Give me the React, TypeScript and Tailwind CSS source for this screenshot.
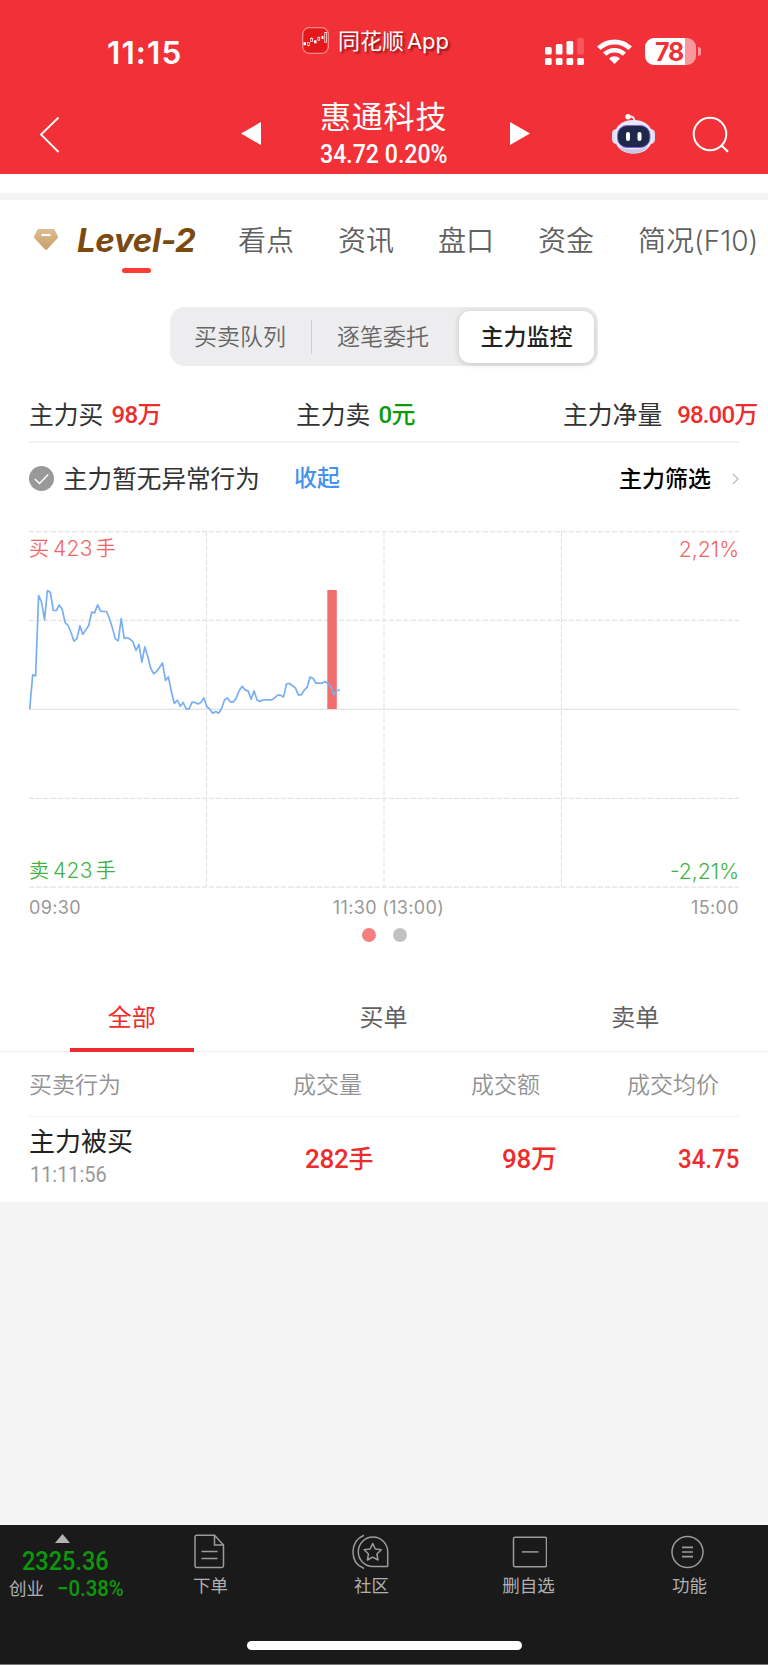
import React from 'react';

const UP = 'text-[#ee2c2c]';
const DIN = "font-['Roboto','Noto_Sans_CJK_SC',sans-serif]";
// Roboto squeezed a little, close to the narrow figures of DIN
const NARROW_LEFT = 'inline-block origin-left scale-x-[0.925]';
const NARROW_RIGHT = 'inline-block origin-right scale-x-[0.925]';

// One value per trading minute, 534 is the upper edge of the chart (2.21%)
const PRICES = [
  0, 103, 100, 341, 322, 268, 356, 350, 296, 296, 313, 300, 260, 251, 230, 204, 211, 250, 225, 238, 251, 291, 289, 313,
  294, 293, 293, 272, 244, 211, 205, 272, 212, 215, 210, 202, 176, 194, 141, 187, 158, 123, 106, 113, 126, 139, 86, 97,
  53, 17, 27, 9, 20, 1, 1, 21, 20, 16, 20, 34, 8, 0, -12, -7, -12, 2, 28, 34, 22, 22, 34, 56, 69, 57, 55, 30, 55, 28,
  23, 28, 28, 28, 28, 34, 42, 42, 37, 76, 77, 71, 64, 43, 43, 57, 66, 97, 92, 78, 78, 78, 83, 77, 68, 43, 56, 57,
];

const StatusBar: React.FC = () => (
  <div className="flex h-[94px] items-start">
    <div className="ml-[107px] mt-[36px] w-[195px] text-[31.5px] font-semibold leading-[34px] tracking-[1.1px]">11:15</div>
    <svg className="mt-[27px] h-[27px] w-[27px]" viewBox="0 0 27 27" fill="none">
      <rect x="0.7" y="0.7" width="25.6" height="25.6" rx="6.5" fill="#e3191d" stroke="#fb8a8b" strokeWidth="1.3" />
      <path d="M1.500 16.700h2.500M12 14.700h2.500M19.500 10.500h2" stroke="#fff" strokeWidth="3" />
      <rect x="5.400" y="15.500" width="1.900" height="2.800" stroke="#fff" strokeWidth="0.7" />
      <rect x="8.700" y="11.500" width="2" height="3" stroke="#fff" strokeWidth="0.7" />
      <rect x="15.800" y="10.500" width="1.900" height="2.500" stroke="#fff" strokeWidth="0.7" />
      <rect x="22.800" y="5.500" width="1.800" height="10" stroke="#fff" strokeWidth="0.7" />
      <path d="M6.400 18.300v1M9.700 10.300v1.200M16.700 9.500v1M16.700 13v1" stroke="#fff" strokeWidth="0.7" />
    </svg>
    <div className="ml-[9px] mt-[29px] w-[207px] whitespace-nowrap text-[22px] leading-6 [text-shadow:2px_2px_2px_rgba(90,0,0,0.6)]">
      同花顺<span className="ml-[3px] tracking-[-0.1px]">App</span>
    </div>
    <svg className="mt-[38px] h-[27px] w-[39px]" viewBox="0 0 39 27" fill="#fff">
      <rect x="0" y="9" width="6.700" height="7.500" rx="1.500" />
      <rect x="10.800" y="6" width="6.700" height="10.500" rx="1.500" />
      <rect x="21.500" y="3" width="6.700" height="13.500" rx="1.500" />
      <rect x="32.200" y="0" width="6.700" height="16.500" rx="1.500" fillOpacity="0.2" />
      <rect x="0" y="20" width="6.700" height="7" rx="1.500" />
      <rect x="10.800" y="20" width="6.700" height="7" rx="1.500" />
      <rect x="21.500" y="20" width="6.700" height="7" rx="1.500" />
      <rect x="32.200" y="20" width="6.700" height="7" rx="1.500" />
    </svg>
    <svg className="ml-[13px] mt-[39px] h-[25px] w-[35px]" viewBox="0 0 35 25" fill="none" stroke="#fff">
      <path d="M1.800 9.300a22.500 22.500 0 0 1 31.400 0" strokeWidth="5" />
      <path d="M7.600 15.200a14.200 14.200 0 0 1 19.800 0" strokeWidth="4.600" />
      <path d="M17.500 25L12 19.400a7.800 7.800 0 0 1 11 0z" fill="#fff" stroke="none" />
    </svg>
    <div className="ml-[13px] mt-[38px] h-[27px] w-[51px] rounded-[9px] bg-[linear-gradient(90deg,#fff_40px,#f9989c_40px)] pl-[10px] text-[25px] font-bold leading-[28px] tracking-[-1.2px] text-[#f23037]">
      78
    </div>
    <div className="ml-[2px] mt-[47px] h-[9px] w-[3px] rounded-r-[3px] bg-[#f9989c]" />
  </div>
);

const RobotIcon: React.FC = () => (
  <svg className="h-[40px] w-[43px]" viewBox="0 0 43 40" fill="none">
    <path d="M16 2.700c4-1 6.500.5 6.500 4.300" stroke="#e6e4f8" strokeWidth="2" />
    <circle cx="16" cy="2.800" r="2.700" fill="#fff" />
    <rect x="0" y="15" width="9" height="15" rx="4.500" fill="#dcdcf2" />
    <rect x="34" y="15" width="9" height="15" rx="4.500" fill="#dcdcf2" />
    <path d="M21.500 6C9 6 2.500 13 2.500 22.500S9 39.500 21.500 39.500s19-7.500 19-17S34 6 21.500 6z" fill="#e8e8f6" />
    <path d="M7 32.500c3.500 4.700 8.500 7 14.500 7s11-2.300 14.500-7c-7 4-22 4-29 0z" fill="#c9c7ea" />
    <rect x="5.500" y="11.500" width="32.500" height="22" rx="9.500" fill="#1e284b" stroke="#8b62dc" strokeWidth="1" />
    <rect x="14" y="18" width="4" height="9" rx="2" fill="#fff" />
    <rect x="25.500" y="18" width="4" height="9" rx="2" fill="#fff" />
  </svg>
);

const NavBar: React.FC = () => (
  <div className="flex h-[80px] items-start">
    <svg className="ml-[39px] mt-[22px] h-[37px] w-[21px]" viewBox="0 0 21 37" fill="none" stroke="#fff" strokeWidth="1.800">
      <path d="M19.500 1.500L2 18.500l17.500 17.500" />
    </svg>
    <svg className="ml-[181px] mt-[28px] h-[23px] w-[20px]" viewBox="0 0 20 23" fill="#fff">
      <path d="M0 11.500L20 0v23z" />
    </svg>
    <div className="ml-[59px] w-[127px] whitespace-nowrap">
      <div className="mt-[6px] text-[31px] leading-[33px] tracking-[0.8px]">惠通科技</div>
      <div className={`mt-[9px] text-[25px] font-medium leading-[25px] ${DIN}`}>
        <span className={NARROW_LEFT}>34.72 0.20%</span>
      </div>
    </div>
    <svg className="ml-[63px] mt-[28px] h-[23px] w-[20px]" viewBox="0 0 20 23" fill="#fff">
      <path d="M20 11.500L0 0v23z" />
    </svg>
    <div className="ml-[82px] mt-[20px]">
      <RobotIcon />
    </div>
    <svg className="ml-[37px] mt-[22px] h-[38px] w-[38px]" viewBox="0 0 38 38" fill="none" stroke="#fff" strokeWidth="2">
      <circle cx="18" cy="18" r="16.300" />
      <path d="M29 29l7 6.800" strokeWidth="2.200" />
    </svg>
  </div>
);

const PageTabs: React.FC = () => (
  <div className="flex h-[107px] items-start whitespace-nowrap pt-[26px] text-[28px] font-[350] leading-[30px] text-[#606060]">
    <svg className="ml-[34px] mt-[3px] h-[21px] w-[24px]" viewBox="0 0 24 21">
      <defs>
        <linearGradient id="gem" x1="0" y1="0" x2="0" y2="1">
          <stop offset="0" stopColor="#dcbd92" />
          <stop offset="1" stopColor="#c79f67" />
        </linearGradient>
      </defs>
      <path d="M5 0h14q1 0 1.600.8L24 7.500q.3 1-.5 1.800L13 20.400q-1 .8-2 0L.5 9.300Q-.3 8.500 0 7.500L3.400.8Q4 0 5 0z" fill="url(#gem)" />
      <path d="M7.500 6h9" stroke="#fff" strokeWidth="2.200" />
    </svg>
    <div className="ml-[19px] flex w-[161px] flex-col">
      <span className="text-[33px] font-bold italic leading-[28px] tracking-[-0.3px] text-[#7a4a10]">Level-2</span>
      <span className="ml-[45px] mt-[14px] h-[5px] w-[29px] rounded-full bg-[#ff3b33]" />
    </div>
    <span className="w-[100px]">看点</span>
    <span className="w-[100px]">资讯</span>
    <span className="w-[100px]">盘口</span>
    <span className="w-[100px]">资金</span>
    <span>简况(F10)</span>
  </div>
);

const SegmentedControl: React.FC = () => (
  <div className="ml-[170px] flex h-[59px] w-[428px] items-center whitespace-nowrap rounded-[15px] bg-[#ededef] text-[23px] leading-none text-[#666]">
    <span className="ml-[24px] mt-[2px] w-[117px] font-[350]">买卖队列</span>
    <span className="h-[34px] w-px bg-[#cfcfd1]" />
    <span className="ml-[25px] mt-[2px] w-[122px] font-[350]">逐笔委托</span>
    <div className="flex h-[52px] w-[135px] items-center justify-center rounded-[11px] bg-white pt-[2px] font-medium text-[#222] shadow-[0_1px_6px_rgba(0,0,0,0.18)]">
      主力监控
    </div>
  </div>
);

interface StatProps {
  label: string;
  value: string;
  className: string;
  valueClass: string;
}

const Stat: React.FC<StatProps> = ({ label, value, className, valueClass }) => (
  <div className={`flex items-center ${className}`}>
    <span className="pt-px text-[24.800px] text-[#333]">{label}</span>
    <span className={`text-[24px] font-medium ${DIN} ${valueClass}`}>{value}</span>
  </div>
);

const Summary: React.FC = () => (
  <div className="pt-[33px] leading-none">
    <div className="ml-[29px] flex h-[32px] items-center whitespace-nowrap">
      <Stat label="主力买" value="98万" className="w-[267px]" valueClass={`ml-[8px] tracking-[-0.6px] ${UP}`} />
      <Stat label="主力卖" value="0元" className="w-[267px]" valueClass="ml-[8px] tracking-[-0.6px] text-[#0a9a0a]" />
      <Stat label="主力净量" value="98.00万" className="" valueClass={`ml-[15px] tracking-[-0.85px] ${UP}`} />
    </div>
    <div className="mx-[29px] mt-[10px] h-[2px] bg-[#f3f3f3]" />
    <div className="mx-[29px] flex h-[71px] items-center whitespace-nowrap">
      <svg className="h-[25px] w-[25px]" viewBox="0 0 25 25" fill="none">
        <circle cx="12.500" cy="12.500" r="12.500" fill="#999" />
        <path d="M5.800 13l4.700 4.500 8.700-9" stroke="#fff" strokeWidth="1.400" />
      </svg>
      <span className="ml-[9px] w-[231px] pt-[2px] text-[24.600px] text-[#333]">主力暂无异常行为</span>
      <span className="text-[23px] font-medium text-[#4691ee]">收起</span>
      <span className="ml-auto pt-[2px] text-[23px] font-medium text-black">主力筛选</span>
      <svg className="ml-[21px] h-[12px] w-[7px]" viewBox="0 0 7 12" fill="none" stroke="#b5b5b5" strokeWidth="1.200">
        <path d="M.8.8L6 6 .8 11.200" />
      </svg>
    </div>
  </div>
);

const TradeChart: React.FC = () => {
  const points = PRICES.map((p, i) => `${(0.7 + i * 2.952).toFixed(1)},${(178.2 - p / 3).toFixed(1)}`).join(' ');

  return (
    <div className="mx-[29px] mt-[17px]">
      <div className="grid h-[357px]">
        <svg className="col-start-1 row-start-1 h-[357px] w-[710px]" viewBox="0 0 710 357" fill="none">
          <g stroke="#e3e3e3" strokeWidth="1.200" strokeDasharray="5.200 2">
            <path d="M0 .6h710M0 89.300h710M0 267.300h710M0 356.200h710" />
            <path d="M177.500 0v356M355 0v356M532.500 0v356" />
          </g>
          <path d="M0 178.300h710" stroke="#e3e3e3" strokeWidth="1.200" />
          <rect x="298.300" y="59" width="9.500" height="119" fill="#f26d6d" />
          <polyline points={points} stroke="#78aff3" strokeWidth="1.700" strokeLinejoin="round" />
        </svg>
        <div className="col-start-1 row-start-1 flex flex-col justify-between whitespace-nowrap pb-[7px] pt-[8px] text-[20px] font-[350] leading-[20px]">
          <div className="flex justify-between text-[#f26464]">
            <span>
              买<span className="ml-[4px] mr-[3px] text-[21px] tracking-[0.3px]">423</span>手
            </span>
            <span className="text-[21.200px]">2,21%</span>
          </div>
          <div className="flex justify-between text-[#3fb23f]">
            <span>
              卖<span className="ml-[4px] mr-[3px] text-[21px] tracking-[0.3px]">423</span>手
            </span>
            <span className="text-[21.200px]">-2,21%</span>
          </div>
        </div>
      </div>
      <div className="mt-[10px] grid h-[20px] grid-cols-[1fr_auto_1fr] items-center text-[18px] leading-none tracking-[0.35px] text-[#999]">
        <span>09:30</span>
        <span className="ml-[9px]">11:30 (13:00)</span>
        <span className="text-right">15:00</span>
      </div>
      <div className="mt-[10px] flex h-[14px] justify-center gap-[17px]">
        <span className="h-[14px] w-[14px] rounded-full bg-[#f38080]" />
        <span className="h-[14px] w-[14px] rounded-full bg-[#c1c1c1]" />
      </div>
    </div>
  );
};

const OrderTabs: React.FC = () => (
  <div className="mt-[38px] flex h-[72px] border-b border-[#f0f0f0] pl-[6px] pr-[7px] text-[24px] leading-none text-[#606060]">
    <div className={`flex flex-1 flex-col items-center pt-[26px] ${UP}`}>
      全部
      <span className="mt-[18px] h-[4px] w-[124px] shrink-0 bg-[#ee2c2c]" />
    </div>
    <div className="flex-1 pt-[26px] text-center">买单</div>
    <div className="flex-1 pt-[26px] text-center">卖单</div>
  </div>
);

const OrderTable: React.FC = () => (
  <div className="whitespace-nowrap leading-none">
    <div className="mx-[29px] flex h-[65px] items-center border-b border-[#f4f4f4] pt-[2px] text-[23px] font-[350] text-[#929292]">
      <span className="w-[264px]">买卖行为</span>
      <span className="w-[178px]">成交量</span>
      <span className="w-[156px]">成交额</span>
      <span>成交均价</span>
    </div>
    <div className="mx-[29px] flex h-[85px] items-start">
      <div className="w-[276px] pt-[12px]">
        <div className="text-[26px] text-[#222]">主力被买</div>
        <div className={`mt-[9px] pl-px text-[21.500px] text-[#999] ${DIN}`}>
          <span className={NARROW_LEFT}>11:11:56</span>
        </div>
      </div>
      <div className={`flex flex-1 pt-[29px] text-[26px] font-medium ${DIN} ${UP}`}>
        <span className="w-[197px]">
          <span className="tracking-[-0.3px]">282</span>
          <span className="text-[25px]">手</span>
        </span>
        <span>
          <span className="tracking-[-0.3px]">98</span>万
        </span>
        <span className={`ml-auto ${NARROW_RIGHT}`}>34.75</span>
      </div>
    </div>
  </div>
);

interface ToolItemProps {
  label: string;
  className: string;
  children: React.ReactNode;
}

const ToolItem: React.FC<ToolItemProps> = ({ label, className, children }) => (
  <div className={`flex flex-col items-center ${className}`}>
    <svg className="h-[36px] w-[38px]" viewBox="0 0 38 36" fill="none" stroke="#9b9b9b" strokeWidth="1.500">
      {children}
    </svg>
    <span className="mt-[7px] pl-px">{label}</span>
  </div>
);

const BottomBar: React.FC = () => (
  <div className="h-[140px] border-b border-[#777] bg-[#1a1a1a]">
    <div className="flex h-[116px] items-start whitespace-nowrap text-[17.500px] leading-none text-[#b0b0b0]">
      <div className={`w-[178px] ${DIN}`}>
        <svg className="ml-[55px] mt-[9px] h-[9px] w-[15px]" viewBox="0 0 15 9" fill="#b3b3b3">
          <path d="M7.500 0L15 9H0z" />
        </svg>
        <div className="ml-[22px] mt-[6px] text-[25px] font-medium text-[#0a9a0a]">
          <span className="inline-block origin-left scale-x-[0.94]">2325.36</span>
        </div>
        <div className="mt-[4px] flex items-center">
          <span className="ml-[9px] mt-[2px] w-[48px]">创业</span>
          <span className={`text-[22px] font-medium text-[#0a9a0a] ${NARROW_LEFT}`}>−0.38%</span>
        </div>
      </div>
      <ToolItem label="下单" className="mt-[9px] w-[64px]">
        <path d="M4 3q0-1.700 1.700-1.700H23.500L32.500 11v20.800q0 1.700-1.700 1.700H5.700q-1.700 0-1.700-1.700zM23.500 1.300V11h9" />
        <path d="M10.500 17.500h16M10.500 24.500h16" />
      </ToolItem>
      <ToolItem label="社区" className="ml-[97px] mt-[9px] w-[64px]">
        <path d="M12 1.300C4.500 4.500 1 10.500 1 18S4.500 31.500 12 34.500" />
        <path d="M35.200 32.500H21A14.700 14.700 0 1 1 35.700 18v14z" />
        <path
          d="M20.700 9.500l2.600 5.500 6 .8-4.400 4.200 1.100 6-5.300-2.900-5.300 2.900 1.100-6-4.400-4.200 6-.8z"
          strokeLinejoin="round"
        />
      </ToolItem>
      <ToolItem label="删自选" className="ml-[93px] mt-[9px] w-[64px]">
        <rect x="4.500" y="3.200" width="33" height="29.500" rx="1.500" />
        <path d="M13 17.900h16.500" />
      </ToolItem>
      <ToolItem label="功能" className="ml-[97px] mt-[9px] w-[64px]">
        <circle cx="17.500" cy="18" r="15.500" />
        <path d="M12 13.300h11M12 18h11M12 22.600h11" strokeWidth="1.700" />
      </ToolItem>
    </div>
    <div className="mx-auto h-[9px] w-[275px] rounded-full bg-white" />
  </div>
);

export default function App() {
  return (
    <div className="flex h-[1665px] w-[768px] flex-col overflow-hidden bg-[#f4f4f4] font-['Inter','Noto_Sans_CJK_SC',sans-serif]">
      <header className="h-[174px] bg-[#f23037] text-white">
        <StatusBar />
        <NavBar />
      </header>
      <div className="h-[19px] bg-white" />
      <main className="mt-[7px] h-[1002px] bg-white">
        <PageTabs />
        <SegmentedControl />
        <Summary />
        <TradeChart />
        <OrderTabs />
        <OrderTable />
      </main>
      <div className="flex-1" />
      <BottomBar />
    </div>
  );
}
